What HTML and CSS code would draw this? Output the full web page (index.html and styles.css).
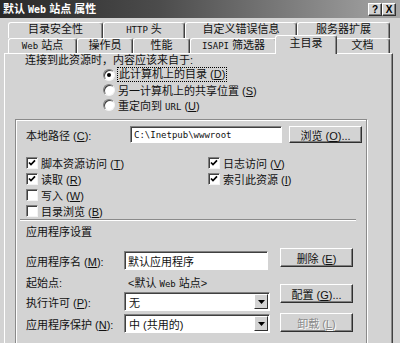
FILE: index.html
```html
<!doctype html>
<html>
<head>
    <meta charset="utf-8">
    <title>默认 Web 站点 属性</title>
    <link rel="stylesheet" href="styles.css">
</head>
<body>
    <div class="dialog">
        <div class="titlebar">
            <span class="title">默认 <span class="en">Web</span> 站点 属性</span>
            <div class="title-buttons">
                <span class="tbtn">?</span>
                <span class="tbtn">X</span>
            </div>
        </div>

        <!-- Tab strip, two rows -->
        <div class="tabs">
            <div class="tab-row back">
                <div class="tab">目录安全性</div>
                <div class="tab"><span class="en">HTTP</span> 头</div>
                <div class="tab">自定义错误信息</div>
                <div class="tab">服务器扩展</div>
            </div>
            <div class="tab-row front">
                <div class="tab"><span class="en">Web</span> 站点</div>
                <div class="tab">操作员</div>
                <div class="tab">性能</div>
                <div class="tab"><span class="en">ISAPI</span> 筛选器</div>
                <div class="tab active">主目录</div>
                <div class="tab">文档</div>
            </div>
        </div>

        <div class="page">
            <p class="source-label">连接到此资源时，内容应该来自于:</p>
            <div class="radios">
                <div class="radio"><span class="dot on"></span><span class="focus">此计算机上的目录 (<u>D</u>)</span></div>
                <div class="radio"><span class="dot"></span><span>另一计算机上的共享位置 (<u>S</u>)</span></div>
                <div class="radio"><span class="dot"></span><span>重定向到 <span class="en">URL</span> (<u>U</u>)</span></div>
            </div>

            <div class="frame">
                <div class="path-row">
                    <span class="path-label">本地路径 (<u>C</u>):</span>
                    <div class="textbox path-box"><span class="en">C:\Inetpub\wwwroot</span></div>
                    <div class="button"><span>浏览 (<u>O</u>)...</span></div>
                </div>

                <div class="checks">
                    <div class="check"><span class="box"><svg viewBox="0 0 10 10"><path d="M2 4.5 L4 6.6 L8 2.4" /></svg></span><span>脚本资源访问 (<u>T</u>)</span></div>
                    <div class="check"><span class="box"><svg viewBox="0 0 10 10"><path d="M2 4.5 L4 6.6 L8 2.4" /></svg></span><span>读取 (<u>R</u>)</span></div>
                    <div class="check"><span class="box"></span><span>写入 (<u>W</u>)</span></div>
                    <div class="check"><span class="box"></span><span>目录浏览 (<u>B</u>)</span></div>
                    <div class="check"><span class="box"><svg viewBox="0 0 10 10"><path d="M2 4.5 L4 6.6 L8 2.4" /></svg></span><span>日志访问 (<u>V</u>)</span></div>
                    <div class="check"><span class="box"><svg viewBox="0 0 10 10"><path d="M2 4.5 L4 6.6 L8 2.4" /></svg></span><span>索引此资源 (<u>I</u>)</span></div>
                </div>

                <div class="sep"></div>
                <div class="group-title">应用程序设置</div>

                <div class="app">
                    <div class="app-fields">
                        <div class="field-row name-row">
                            <span class="field-label">应用程序名 (<u>M</u>):</span>
                            <div class="textbox name-box">默认应用程序</div>
                        </div>
                        <div class="field-row start-row">
                            <span class="field-label">起始点:</span>
                            <span class="start-value">&lt;默认 <span class="en">Web</span> 站点&gt;</span>
                        </div>
                        <div class="field-row exec-row">
                            <span class="field-label">执行许可 (<u>P</u>):</span>
                            <div class="select">
                                <span class="value">无</span>
                                <span class="drop"><svg viewBox="0 0 7 4"><polygon points="0,0 7,0 3.5,4" /></svg></span>
                            </div>
                        </div>
                        <div class="field-row protect-row">
                            <span class="field-label">应用程序保护 (<u>N</u>):</span>
                            <div class="select">
                                <span class="value">中 (共用的)</span>
                                <span class="drop"><svg viewBox="0 0 7 4"><polygon points="0,0 7,0 3.5,4" /></svg></span>
                            </div>
                        </div>
                    </div>
                    <div class="app-buttons">
                        <div class="button"><span>删除 (<u>E</u>)</span></div>
                        <div class="button config"><span>配置 (<u>G</u>)...</span></div>
                        <div class="button unload disabled"><span>卸载 (<u>L</u>)</span></div>
                    </div>
                </div>
            </div>
        </div>
    </div>
</body>
</html>
```

FILE: styles.css
```css
body {
    margin: 0;
    background: #d3d3d3;
    font-family: "Liberation Sans", "Noto Sans CJK SC", sans-serif;
    font-size: 11px;
    color: #111;
}

.dialog {
    width: 400px;
    height: 343px;
    overflow: hidden;
    background: #d3d3d3;
}

.en {
    font-family: "DejaVu Sans Mono", monospace;
    font-size: 9px;
}

u {
    text-underline-offset: 1px;
}

/* Title bar */
.titlebar {
    height: 18px;
    display: flex;
    align-items: center;
    justify-content: space-between;
    padding: 0 4px 0 3px;
    background: linear-gradient(to right, #282828, #4c4c4c 40%, #a6a6a6);
}

.title {
    color: #fff;
    font-weight: bold;
    font-size: 11px;
    line-height: 18px;
    white-space: nowrap;
}

.title .en {
    font-size: 10px;
}

.title-buttons {
    display: flex;
}

.tbtn {
    width: 14px;
    height: 13px;
    box-sizing: border-box;
    background: #d3d3d3;
    border: 1px solid;
    border-color: #fff #303030 #303030 #fff;
    box-shadow: inset -1px -1px 0 #808080;
    font: bold 10px "Liberation Sans", sans-serif;
    line-height: 11px;
    text-align: center;
    color: #000;
}

/* Tabs */
.tabs {
    padding: 4px 0 0 8px;
}

.tab-row {
    display: grid;
}

.tab-row.back {
    grid-template-columns: 95px 82px 112px 93px;
    height: 16px;
}

.tab-row.front {
    grid-template-columns: 69px 56px 57px 87px 58px 55px;
    height: 15px;
}

.tab {
    border-top: 1px solid #fff;
    border-left: 1px solid #fff;
    border-right: 1px solid #404040;
    border-radius: 3px 3px 0 0;
    box-shadow: inset -1px 0 0 #8a8a8a;
    text-align: center;
    line-height: 13px;
    white-space: nowrap;
    background: #d3d3d3;
}

.tab.active {
    position: relative;
    z-index: 1;
    margin: -3px -2px -1px;
    line-height: 15px;
}

/* Tab page */
.page {
    margin: 0 7px 0 4px;
    height: 300px;
    border: 1px solid;
    border-color: #fff #404040 transparent #fff;
    box-shadow: inset -1px 0 0 #8a8a8a;
}

.source-label {
    margin: 0;
    padding-left: 20px;
    line-height: 13px;
}

.radios {
    padding-left: 98px;
}

.radio {
    display: flex;
    align-items: center;
    gap: 3px;
    height: 15px;
    white-space: nowrap;
}

.dot {
    width: 12px;
    height: 12px;
    box-sizing: border-box;
    border-radius: 50%;
    background: #fff;
    border: 1px solid;
    border-color: #808080 #f4f4f4 #f4f4f4 #808080;
    box-shadow: inset 1px 1px 0 #404040;
    display: flex;
    align-items: center;
    justify-content: center;
}

.dot.on::after {
    content: "";
    width: 4px;
    height: 4px;
    border-radius: 50%;
    background: #000;
}

.focus {
    outline: 1px dotted #000;
    padding: 0 1px;
    line-height: 13px;
}

/* Frame around path and application settings */
.frame {
    margin: 7px 0 0 10px;
    width: 352px;
    height: 300px;
    box-sizing: border-box;
    border: 1px solid #8a8a8a;
    box-shadow: inset 1px 1px 0 #fff, 1px 1px 0 #fff;
    padding: 6px 0 0 10px;
}

.path-row {
    display: flex;
    align-items: center;
    height: 17px;
}

.path-label {
    width: 104px;
    white-space: nowrap;
}

.textbox {
    box-sizing: border-box;
    background: #fff;
    border: 1px solid;
    border-color: #808080 #fff #fff #808080;
    box-shadow: inset 1px 1px 0 #404040;
    display: flex;
    align-items: center;
    padding-left: 3px;
    white-space: nowrap;
}

.path-box {
    width: 152px;
    height: 17px;
    margin-right: 7px;
}

.button {
    width: 73px;
    height: 19px;
    box-sizing: border-box;
    background: #d3d3d3;
    border: 1px solid;
    border-color: #fff #303030 #303030 #fff;
    box-shadow: inset -1px -1px 0 #808080;
    display: flex;
    align-items: center;
    justify-content: center;
    white-space: nowrap;
}

.path-row .button {
    height: 17px;
}

.button.disabled {
    color: #8a8a8a;
    text-shadow: 1px 1px 0 #fff;
}

.checks {
    display: grid;
    grid-template-columns: 182px auto;
    grid-template-rows: repeat(4, 16px);
    grid-auto-flow: column;
    margin-top: 12px;
}

.check {
    display: flex;
    align-items: center;
    gap: 3px;
    white-space: nowrap;
}

.box {
    width: 12px;
    height: 12px;
    box-sizing: border-box;
    background: #fff;
    border: 1px solid;
    border-color: #808080 #f4f4f4 #f4f4f4 #808080;
    box-shadow: inset 1px 1px 0 #404040;
    display: flex;
}

.box svg {
    width: 10px;
    height: 10px;
}

.box path {
    fill: none;
    stroke: #000;
    stroke-width: 1.7;
}

.sep {
    margin: 0 10px 0 -6px;
    border-top: 1px solid #8a8a8a;
    border-bottom: 1px solid #fff;
}

.group-title {
    margin-top: 4px;
    line-height: 14px;
}

/* Application settings */
.app {
    display: flex;
    margin-top: 9px;
}

.app-fields {
    width: 244px;
    margin-right: 10px;
}

.field-row {
    display: flex;
    align-items: center;
    height: 19px;
}

.field-label {
    width: 98px;
    white-space: nowrap;
}

.name-row {
    margin-top: 3px;
}

.name-box {
    width: 144px;
    height: 19px;
}

.start-row {
    margin-top: 2px;
    height: 20px;
}

.start-value {
    padding-left: 4px;
    white-space: nowrap;
}

.protect-row {
    margin-top: 3px;
}

.select {
    width: 146px;
    height: 19px;
    box-sizing: border-box;
    background: #fff;
    border: 1px solid;
    border-color: #808080 #fff #fff #808080;
    box-shadow: inset 1px 1px 0 #404040;
    display: flex;
    align-items: center;
    padding: 1px 1px 1px 0;
}

.select .value {
    padding-left: 4px;
    white-space: nowrap;
}

.drop {
    margin-left: auto;
    width: 14px;
    height: 15px;
    box-sizing: border-box;
    background: #d3d3d3;
    border: 1px solid;
    border-color: #fff #303030 #303030 #fff;
    display: flex;
    align-items: center;
    justify-content: center;
}

.drop svg {
    width: 7px;
    height: 4px;
}

.app-buttons .config {
    margin-top: 17px;
}

.app-buttons .unload {
    margin-top: 10px;
}
```
